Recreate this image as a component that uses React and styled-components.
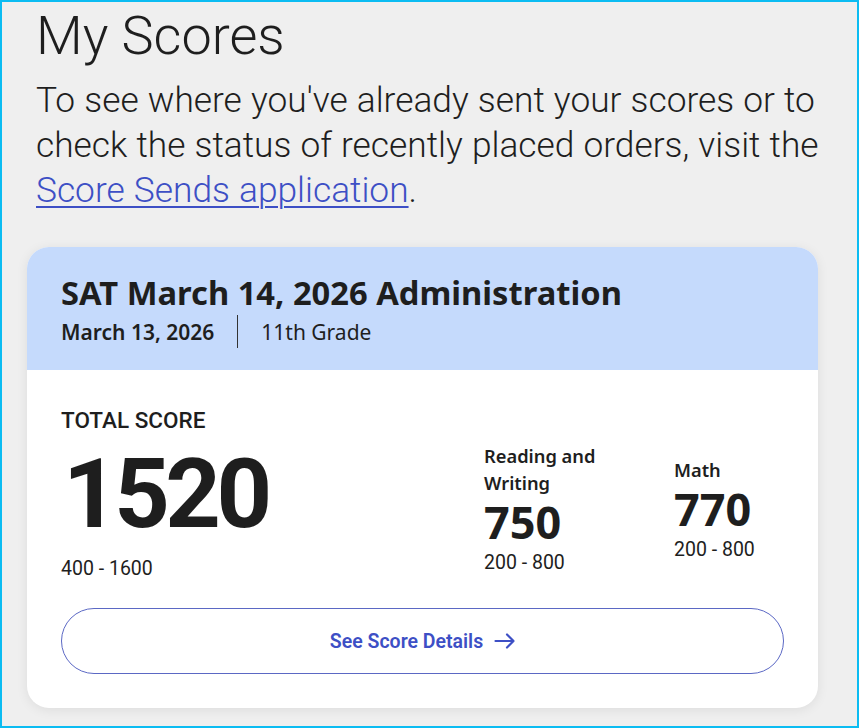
import React from "react";
import styled, { createGlobalStyle } from "styled-components";

const Global = createGlobalStyle`
  html, body { margin: 0; padding: 0; background: #efefef; }
  * { box-sizing: border-box; }
`;

const Frame = styled.div`
  width: 859px;
  height: 728px;
  border: 2px solid #0bbcf2;
  background: #efefef;
  padding: 2px 0 0 34px;
  overflow: hidden;
  font-family: Roboto, "Liberation Sans", sans-serif;
  color: #1e1e1e;
`;

const Title = styled.h1`
  margin: 0;
  font-family: Roboto, sans-serif;
  font-weight: 300;
  font-size: 54px;
  line-height: 64px;
  color: #1e1e1e;
`;

const Intro = styled.p`
  margin: 10px 0 0;
  font-family: Roboto, sans-serif;
  font-weight: 300;
  font-size: 35.3px;
  line-height: 45px;
  word-spacing: 0.5px;
  color: #1e1e1e;
  width: 818px;
`;

const Link = styled.a`
  color: #3d4fc5;
  text-decoration: underline;
  text-decoration-thickness: 1.5px;
  text-underline-offset: 4px;
`;

const Card = styled.section`
  margin: 34px 0 0 -9px;
  width: 791px;
  border-radius: 22px;
  background: #fff;
  overflow: hidden;
  box-shadow: 0 2px 12px rgba(0, 0, 0, 0.08);
`;

const CardHeader = styled.header`
  background: #c5dafc;
  height: 123px;
  padding: 26px 34px 0;
`;

const CardTitle = styled.h2`
  margin: 0;
  font-family: "Noto Sans", "Open Sans", sans-serif;
  font-weight: 700;
  font-size: 32.7px;
  line-height: 40px;
  color: #1e1e1e;
`;

const Meta = styled.div`
  display: flex;
  align-items: center;
  margin-top: 2px;
  font-family: "Noto Sans", "Open Sans", sans-serif;
  font-size: 21px;
  color: #1e1e1e;
`;

const MetaItem = styled.span`
  font-weight: ${(p) => (p.$strong ? 600 : 400)};
  line-height: 30px;
`;

const Divider = styled.span`
  width: 1px;
  height: 33px;
  background: #333;
  margin: 0 23px;
`;

const CardBody = styled.div`
  padding: 37px 34px 34px;
`;

const ScoreRow = styled.div`
  display: flex;
  align-items: flex-start;
`;

const TotalCol = styled.div`
  flex: 0 0 423px;
  display: flex;
  flex-direction: column;
`;

const Label = styled.div`
  font-family: Roboto, sans-serif;
  font-weight: 500;
  font-size: 22.5px;
  line-height: 26px;
  color: #1e1e1e;
`;

const BigScore = styled.div`
  font-family: Roboto, sans-serif;
  font-weight: 700;
  font-size: 97px;
  letter-spacing: -4.5px;
  line-height: 100px;
  margin-top: 11px;
  margin-left: 2px;
  color: #1e1e1e;
`;

const Range = styled.div`
  font-family: Roboto, sans-serif;
  font-size: 19.5px;
  line-height: 22px;
  color: #1e1e1e;
  margin-top: ${(p) => p.$mt || 0}px;
`;

const Sections = styled.div`
  display: flex;
  align-items: center;
  margin-top: 35px;
`;

const Section = styled.div`
  width: ${(p) => p.$w}px;
  display: flex;
  flex-direction: column;
`;

const SectionName = styled.div`
  font-family: "Noto Sans", "Open Sans", sans-serif;
  font-weight: 600;
  font-size: 18.3px;
  line-height: 27px;
  color: #1e1e1e;
`;

const SectionScore = styled.div`
  font-family: "Noto Sans", "Open Sans", sans-serif;
  font-weight: 700;
  font-size: 45px;
  line-height: 50px;
  margin-top: 1px;
  color: #1e1e1e;
`;

const Button = styled.button`
  margin-top: 28px;
  width: 100%;
  height: 66px;
  border: 1px solid #5b68c4;
  border-radius: 33px;
  background: #fff;
  display: flex;
  align-items: center;
  justify-content: center;
  gap: 11px;
  font-family: Roboto, sans-serif;
  font-weight: 600;
  font-size: 19.5px;
  color: #3d4fc5;
  cursor: pointer;
`;

function Arrow() {
  return (
    <svg width="21" height="20" viewBox="0 0 21 20" fill="none" stroke="#3d4fc5" strokeWidth="2.2" strokeLinecap="round" strokeLinejoin="round">
      <path d="M1.5 10h18M13 3.5l6.5 6.5-6.5 6.5" />
    </svg>
  );
}

export default function App() {
  return (
    <>
      <Global />
      <Frame>
        <Title>My Scores</Title>
        <Intro>
          To see where you've already sent your scores or to check the status of recently placed orders, visit the{" "}
          <Link href="#">Score Sends application</Link>.
        </Intro>
        <Card>
          <CardHeader>
            <CardTitle>SAT March 14, 2026 Administration</CardTitle>
            <Meta>
              <MetaItem $strong>March 13, 2026</MetaItem>
              <Divider />
              <MetaItem>11th Grade</MetaItem>
            </Meta>
          </CardHeader>
          <CardBody>
            <ScoreRow>
              <TotalCol>
                <Label>TOTAL SCORE</Label>
                <BigScore>1520</BigScore>
                <Range $mt={14}>400 - 1600</Range>
              </TotalCol>
              <Sections>
                <Section $w={190}>
                  <SectionName>Reading and<br />Writing</SectionName>
                  <SectionScore>750</SectionScore>
                  <Range $mt={5}>200 - 800</Range>
                </Section>
                <Section $w={110}>
                  <SectionName>Math</SectionName>
                  <SectionScore>770</SectionScore>
                  <Range $mt={5}>200 - 800</Range>
                </Section>
              </Sections>
            </ScoreRow>
            <Button>
              See Score Details <Arrow />
            </Button>
          </CardBody>
        </Card>
      </Frame>
    </>
  );
}
